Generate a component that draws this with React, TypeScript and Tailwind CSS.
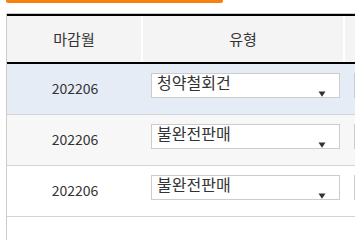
const rows = [
  { month: '202206', type: '청약철회건', bg: 'bg-[#e5ecf6]' },
  { month: '202206', type: '불완전판매', bg: 'bg-[#f7f7f7]' },
  { month: '202206', type: '불완전판매', bg: 'bg-white' },
];

function Arrow() {
  return (
    <svg width="8" height="6" viewBox="0 0 8 6" className="mt-[17px] shrink-0">
      <path d="M0.5 0.5 H7.5 L4 5.8 Z" fill="#333" />
    </svg>
  );
}

function SelectBox({ value }: { value: string }) {
  return (
    <div className="flex h-[25px] w-[189px] justify-between border border-[#cccccc] bg-white pl-[5px] pr-[13px]">
      <span className="text-[16px] leading-[16px] text-[#333]">{value}</span>
      <Arrow />
    </div>
  );
}

export default function App() {
  return (
    <div
      className="h-[240px] w-[355px] overflow-hidden bg-white"
      style={{ fontFamily: '"Noto Sans CJK KR", "Noto Sans", sans-serif' }}
    >
      <div className="ml-[6px] h-[3px] w-[217px] rounded-b-[2px] bg-[#f7810d]" />

      <div className="ml-[6px] mt-[10px] h-[227px] w-[349px] overflow-hidden border-l border-t border-[#cccccc]">
        {/* header */}
        <div className="flex h-[50px] border-y-2 border-black bg-[#f4f4f4] text-[15px] text-[#333]">
          <div className="flex w-[136px] shrink-0 items-center justify-center border-r-2 border-white">마감월</div>
          <div className="flex w-[202px] shrink-0 items-center justify-center border-r-2 border-white">유형</div>
          <div className="flex-1" />
        </div>

        {/* rows */}
        {rows.map((r, i) => (
          <div key={i} className={`flex h-[51px] border-b border-[#d4d4d4] ${r.bg}`}>
            <div className="flex w-[136px] shrink-0 items-center justify-center pb-[1px] text-[14px] text-[#333]">
              {r.month}
            </div>
            <div className="w-[202px] shrink-0 pl-[8px] pt-[9px]">
              <SelectBox value={r.type} />
            </div>
            <div className="shrink-0 pl-[9px] pt-[9px]">
              <div className="h-[25px] w-[60px] border border-[#cccccc] bg-white" />
            </div>
          </div>
        ))}
      </div>
    </div>
  );
}
